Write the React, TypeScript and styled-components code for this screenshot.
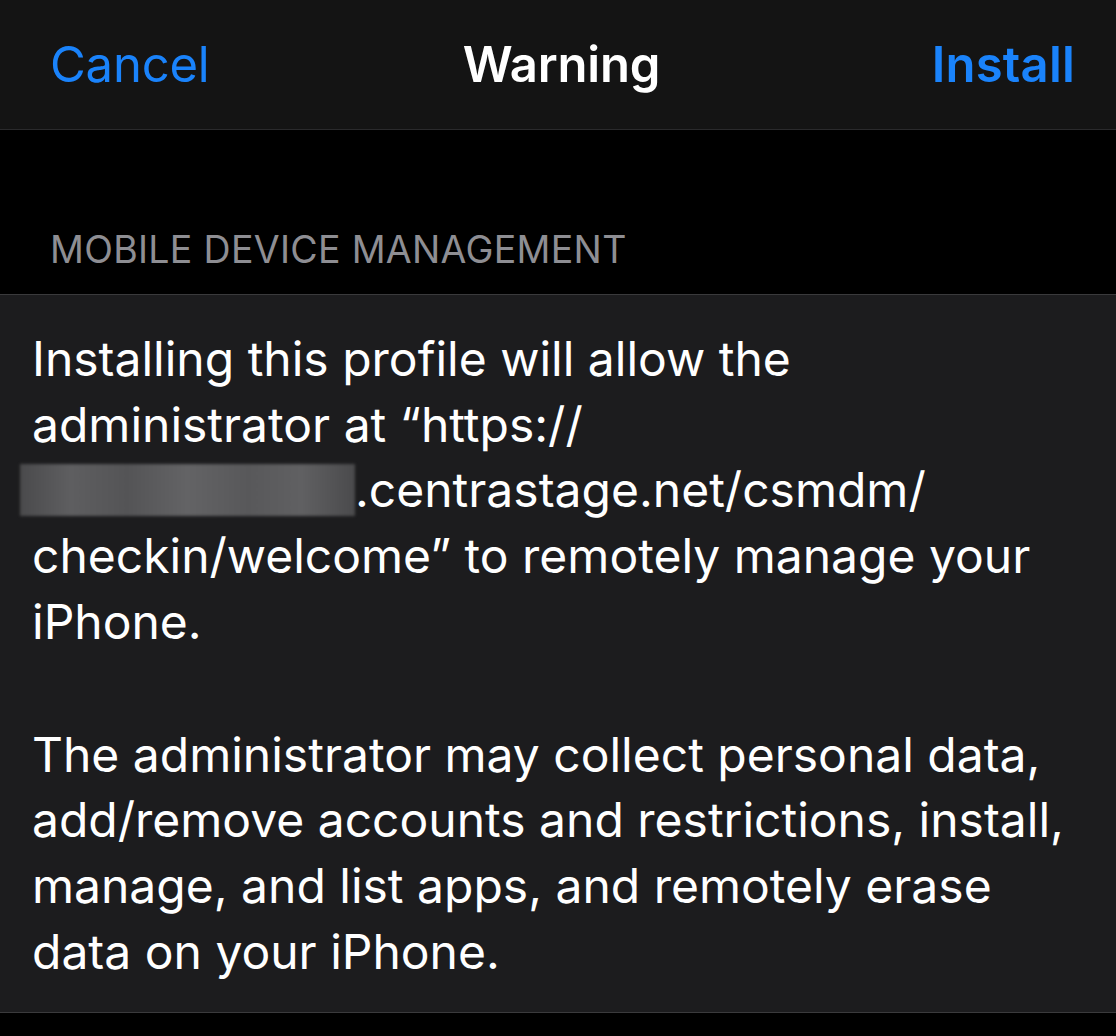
import React from "react";
import styled, { createGlobalStyle } from "styled-components";

const Global = createGlobalStyle`
  html, body { margin: 0; padding: 0; background: #000; }
  body { font-family: Inter, "Noto Sans", "Liberation Sans", sans-serif; -webkit-font-smoothing: antialiased; }
`;

const Page = styled.div`
  width: 1116px;
  height: 1036px;
  background: #000;
  display: flex;
  flex-direction: column;
`;

const NavBar = styled.div`
  height: 130px;
  background: #141414;
  border-bottom: 1px solid #2a2a2c;
  display: grid;
  grid-template-columns: 1fr auto 1fr;
  align-items: center;
  padding: 0 41px 0 50px;
  box-sizing: border-box;
  flex-shrink: 0;
`;

const NavButton = styled.button<{ $bold?: boolean; $align: "left" | "right" }>`
  background: none;
  border: none;
  padding: 0;
  color: #1a83fb;
  font-family: inherit;
  font-size: 49px;
  font-weight: ${(p) => (p.$bold ? 600 : 400)};
  letter-spacing: ${(p) => (p.$bold ? "0.2px" : "-0.2px")};
  justify-self: ${(p) => (p.$align === "left" ? "start" : "end")};
  cursor: pointer;
`;

const Title = styled.div`
  color: #fff;
  font-size: 49px;
  font-weight: 600;
  letter-spacing: -0.2px;
  margin-right: 2px;
`;

const SectionHeader = styled.div`
  height: 165px;
  box-sizing: border-box;
  display: flex;
  align-items: flex-end;
  padding: 0 0 22px 50px;
  color: #8e8e93;
  font-size: 37.5px;
  letter-spacing: 0.3px;
  border-bottom: 1px solid #3a3a3c;
  flex-shrink: 0;
`;

const Card = styled.div`
  background: #1c1c1e;
  padding: 31px 20px 28px 32px;
  border-bottom: 1px solid #3a3a3c;
`;

const Paragraph = styled.p`
  margin: 0;
  color: #fff;
  font-size: 48px;
  line-height: 65.7px;
  letter-spacing: 0px;
  & + & {
    margin-top: 67px;
  }
`;

const Redacted = styled.span`
  display: inline-block;
  width: 335px;
  height: 52px;
  margin-left: -12px;
  vertical-align: -9px;
  background: linear-gradient(90deg, #4a4a4c, #5e5e60 15%, #545456 32%, #636365 50%, #58585a 68%, #606062 84%, #4a4a4c);
  filter: blur(1.5px);
`;

export default function App() {
  return (
    <>
      <Global />
      <Page>
        <NavBar>
          <NavButton $align="left">Cancel</NavButton>
          <Title>Warning</Title>
          <NavButton $align="right" $bold>
            Install
          </NavButton>
        </NavBar>
        <SectionHeader>MOBILE DEVICE MANAGEMENT</SectionHeader>
        <Card>
          <Paragraph>
            Installing this profile will allow the
            <br />
            administrator at “https://
            <br />
            <Redacted />
            .centrastage.net/csmdm/
            <br />
            checkin/welcome” to remotely manage your
            <br />
            iPhone.
          </Paragraph>
          <Paragraph>
            The administrator may collect personal data,
            <br />
            add/remove accounts and restrictions, install,
            <br />
            manage, and list apps, and remotely erase
            <br />
            data on your iPhone.
          </Paragraph>
        </Card>
      </Page>
    </>
  );
}
